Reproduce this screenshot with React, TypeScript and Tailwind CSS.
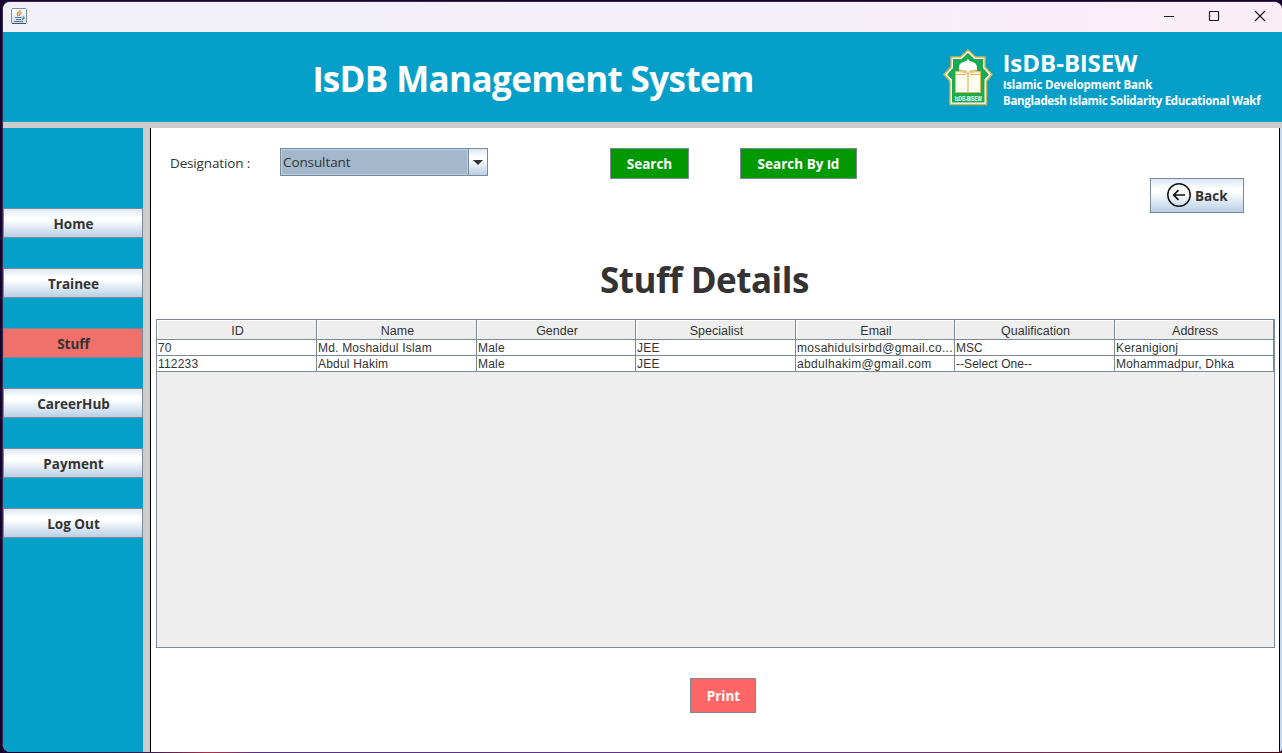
import React from "react";

const ui = "font-['Open_Sans','Noto_Sans',sans-serif]";

const navItems = ["Home", "Trainee", "Stuff", "CareerHub", "Payment", "Log Out"];

const columns = ["ID", "Name", "Gender", "Specialist", "Email", "Qualification", "Address"];

const rows = [
  ["70", "Md. Moshaidul Islam", "Male", "JEE", "mosahidulsirbd@gmail.co...", "MSC", "Keranigionj"],
  ["112233", "Abdul Hakim", "Male", "JEE", "abdulhakim@gmail.com", "--Select One--", "Mohammadpur, Dhka"],
];

const grid = "grid grid-cols-[160px_160px_159px_160px_159px_160px_159px]";
const metal = "bg-[linear-gradient(180deg,#dde8f3_0%,#ffffff_30%,#ffffff_40%,#b8cfe5_100%)]";

// Sets every capital I without slab serifs.
function Plain({ children }: { children: string }) {
  return (
    <>
      {children.split(/(I)/).map((part, i) =>
        part === "I" ? (
          <span key={i} className="font-['Roboto',sans-serif]">
            I
          </span>
        ) : (
          part
        ),
      )}
    </>
  );
}

function JavaIcon() {
  return (
    <svg width="16" height="16" viewBox="0 0 16 16" className="mb-[2px] ml-2">
      <defs>
        <linearGradient id="java" x1="0" y1="0" x2="0" y2="1">
          <stop offset="0" stopColor="#ffffff" />
          <stop offset="1" stopColor="#cfdbe6" />
        </linearGradient>
      </defs>
      <rect x="0.5" y="0.5" width="15" height="15" rx="1" fill="url(#java)" stroke="#7d8fa3" />
      <path d="M1 15.5h14" stroke="#45566a" />
      <path d="M9.800 2.500C6 5 5.500 5.500 7.300 8.200M10.500 4.500C8.300 5.500 8 6.500 8.800 8" fill="none" stroke="#e8892f" strokeWidth="1.400" />
      <path d="M4 9.500h6.500M5 11.500h5M3 13.500h9M11.500 8.800c2.500 0 2 2-.5 2.500" fill="none" stroke="#52789c" strokeWidth="1.200" />
    </svg>
  );
}

function Emblem() {
  return (
    <svg width="50" height="57" viewBox="0 0 50 57" className="overflow-visible">
      <path
        d="M25 1 32.500 8H42V18L49 25.500 43.500 32V55.500H7V32L1 25.500 8 18V8H17.500Z"
        fill="#fff"
        stroke="#d3b449"
        strokeWidth="1.500"
      />
      <path d="M25 4 31.500 10H40V19L46 25.500 41.500 30.500V53.500H9V30.500L4 25.500 10 19V10H18.500Z" fill="#18ab4f" />
      <path d="M13 43V26L16 22V18C16 15 19 13 22 12.500Q24 11.500 25 10 26 11.500 28 12.500C31 13 34 15 34 18V22L37 26V43Z" fill="#fff" />
      <path d="M25 24.500C22 22.500 17 22.500 12.500 22.500V43.500H37.500V22.500C33 22.500 28 22.500 25 24.500Z" fill="#fffdf2" stroke="#dfb754" strokeWidth="1.200" />
      <path d="M25 24v19.500M13 25.500h10M27 25.500h10M16 21.500q5-.5 8 1.500M34 21.500q-5-.5-8 1.500" fill="none" stroke="#dfb754" strokeWidth="1.200" />
      <text x="25.300" y="52" fill="#fff" fontSize="8" fontWeight="bold" fontFamily="Liberation Sans, sans-serif" textAnchor="middle" textLength="27" lengthAdjust="spacingAndGlyphs">
        IsDB-BISEW
      </text>
    </svg>
  );
}

function TitleBar() {
  return (
    <div className="flex h-[30px] shrink-0 items-center bg-[linear-gradient(90deg,#f1f0f7_0%,#f4f0f8_60%,#f9eef8_80%,#fbedf6_100%)]">
      <JavaIcon />
      <div className="flex-1" />
      <svg width="104" height="14" viewBox="0 0 104 14" fill="none" stroke="#1a1a1a" className="mr-4 mb-[2px]">
        <path d="M2 7.500h10" />
        <rect x="47.500" y="2.500" width="9" height="9" rx="0.500" strokeWidth="1.200" />
        <path d="M93 2l10 10M103 2L93 12" strokeWidth="1.100" />
      </svg>
    </div>
  );
}

function Header() {
  return (
    <header className="flex h-24 shrink-0 border-b-[6px] border-[#cccccc] bg-[#059fc9] text-white">
      <h1 className={`${ui} w-[940px] whitespace-nowrap pl-[310px] pt-[22px] text-[35px] leading-[50px] font-bold tracking-[-0.6px]`}>
        <Plain>IsDB Management System</Plain>
      </h1>
      <div className="pt-[17px]">
        <Emblem />
      </div>
      <div className={`${ui} whitespace-nowrap pl-[10px] pt-4 font-bold`}>
        <div className="text-[24px] leading-[30px] tracking-[0.1px]">
          <Plain>IsDB-BISEW</Plain>
        </div>
        <div className="-mt-[2px] text-[11.5px] leading-4 tracking-[-0.15px]">
          <Plain>Islamic Development Bank</Plain>
        </div>
        <div className="text-[11.5px] leading-4 tracking-[-0.3px]">
          <Plain>Bangladesh Islamic Solidarity Educational Wakf</Plain>
        </div>
      </div>
    </header>
  );
}

function Sidebar() {
  return (
    <nav className="flex w-[147px] shrink-0 flex-col gap-[30px] border-r-[7px] border-[#cccccc] bg-[#059fc9] pt-20">
      {navItems.map((item) => (
        <button
          key={item}
          className={`${ui} h-[30px] w-full border border-[#7a8a99] pt-px pl-px text-[13.5px] leading-7 font-bold text-[#333333] ${
            item === "Stuff" ? "bg-[#f0716b]" : metal
          }`}
        >
          {item}
        </button>
      ))}
    </nav>
  );
}

function StaffTable() {
  return (
    <div className="ml-[5px] mt-[14px] h-[329px] w-[1119px] border border-[#7a8a99] bg-[#eeeeee] font-['Liberation_Sans',Arial,sans-serif] text-[12px] text-[#333333]">
      <div className={grid}>
        {columns.map((c) => (
          <div key={c} className="h-5 border-r border-b border-[#7a8a99] pt-[1px] pl-[2px] text-center text-[12.5px] leading-5 shadow-[inset_1px_1px_0_#ffffff]">
            {c}
          </div>
        ))}
      </div>
      {rows.map((row) => (
        <div key={row[0]} className={grid}>
          {row.map((cell, i) => (
            <div
              key={i}
              className={`h-4 whitespace-nowrap border-r border-b border-[#7a8a99] bg-white pl-px text-[12px] leading-4 ${
                i === 4 ? "tracking-[0.32px]" : i === 5 ? "tracking-[0.05px]" : "tracking-[0.2px]"
              }`}
            >
              {cell}
            </div>
          ))}
        </div>
      ))}
    </div>
  );
}

function Content() {
  return (
    <main className={`${ui} flex w-[1130px] flex-col border-x border-black bg-white text-[#333333]`}>
      <div className="flex h-[85px] pt-5">
        <label className="w-[129px] pl-[19px] pt-1 text-[13.5px] leading-[22px] tracking-[-0.15px]">Designation :</label>
        <div className="flex h-7 w-[208px] border border-[#7a8a99]">
          <div className="flex-1 border border-[#b8cfe5] bg-[#a3b8cc] pl-px text-[13.5px] leading-6 tracking-[-0.1px]">Consultant</div>
          <div className={`flex w-[19px] items-center justify-center border-l border-[#7a8a99] ${metal}`}>
            <svg width="10" height="5" viewBox="0 0 10 5">
              <path d="M0 0h10L5 5Z" fill="#333" />
            </svg>
          </div>
        </div>
        <button className="ml-[122px] h-[31px] w-[79px] border border-[#7a8a99] bg-[#009900] pt-0.5 text-[13.5px] font-bold text-white">Search</button>
        <button className="ml-[51px] h-[31px] w-[117px] whitespace-nowrap border border-[#7a8a99] bg-[#009900] pt-0.5 text-[13.5px] font-bold text-white">
          <Plain>Search By Id</Plain>
        </button>
        <button className={`ml-[293px] mt-[30px] flex h-[35px] w-[94px] items-center border border-[#7a8a99] pl-4 text-[13.5px] font-bold ${metal}`}>
          <svg width="24" height="24" viewBox="0 0 24 24" fill="none" stroke="#111" className="mr-1 mb-px shrink-0">
            <circle cx="12" cy="12" r="11.200" strokeWidth="1.500" />
            <path d="M18 12H6.800M11.500 7.200 6.700 12l4.800 4.800" strokeWidth="1.700" />
          </svg>
          <span className="pt-px">Back</span>
        </button>
      </div>
      <h2 className="mt-[42px] whitespace-nowrap pl-[449px] text-[35px] leading-[50px] font-bold tracking-[-0.5px]">Stuff Details</h2>
      <StaffTable />
      <button className="ml-[539px] mt-[30px] h-[35px] w-[66px] border border-[#7a8a99] bg-[#ff6666] pt-px pl-px text-[13.5px] font-bold text-white">Print</button>
    </main>
  );
}

export default function App() {
  return (
    <div className="h-[753px] w-[1282px] overflow-hidden bg-[linear-gradient(90deg,#16022e_0%,#3d1d4d_12%,#b0304c_16.500%,#59307f_20%,#63358c_60%,#7c2942_90%,#4a0716_100%)]">
      <div className="flex h-[752px] border-l-2 border-t border-[#16022e] bg-[#16022e]">
        <div className="flex w-full flex-col overflow-hidden rounded-tl-lg rounded-tr-lg rounded-bl-lg rounded-br-sm border-l border-t border-[#38294f] bg-[#c4d8ee]">
          <TitleBar />
          <Header />
          <div className="flex flex-1">
            <Sidebar />
            <Content />
          </div>
        </div>
      </div>
    </div>
  );
}
